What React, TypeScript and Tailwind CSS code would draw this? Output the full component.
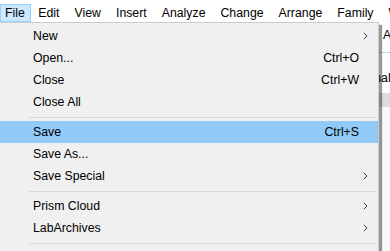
import { Fragment } from 'react';

type Entry =
  | { kind: 'item'; label: string; shortcut?: string; submenu?: boolean; active?: boolean }
  | { kind: 'sep' };

const menuBar = ['File', 'Edit', 'View', 'Insert', 'Analyze', 'Change', 'Arrange', 'Family', 'Window'];

const entries: Entry[] = [
  { kind: 'item', label: 'New', submenu: true },
  { kind: 'item', label: 'Open...', shortcut: 'Ctrl+O' },
  { kind: 'item', label: 'Close', shortcut: 'Ctrl+W' },
  { kind: 'item', label: 'Close All' },
  { kind: 'sep' },
  { kind: 'item', label: 'Save', shortcut: 'Ctrl+S', active: true },
  { kind: 'item', label: 'Save As...' },
  { kind: 'item', label: 'Save Special', submenu: true },
  { kind: 'sep' },
  { kind: 'item', label: 'Prism Cloud', submenu: true },
  { kind: 'item', label: 'LabArchives', submenu: true },
  { kind: 'sep' },
  { kind: 'item', label: 'Import' },
];

const Chevron = () => (
  <svg width="5" height="8" viewBox="0 0 5 8" className="block">
    <path d="M0.8 0.8 L4 4 L0.8 7.2" fill="none" stroke="#3c3c3c" strokeWidth="1" />
  </svg>
);

export default function App() {
  return (
    <div
      className="relative w-[390px] h-[251px] overflow-hidden bg-white text-black flex flex-col"
      style={{ fontFamily: '"Liberation Sans", Arial, sans-serif' }}
    >
      {/* menu bar */}
      <div className="h-[23px] shrink-0 flex items-start pt-[4px] text-[12.3px] whitespace-nowrap">
        {menuBar.map((m, i) => (
          <span
            key={m}
            className={
              i === 0
                ? 'h-[18px] flex items-center pl-[4px] pr-[5px] border border-[#99d1ff] bg-[#cce8ff]'
                : 'h-[18px] flex items-center px-[6.5px] border border-transparent'
            }
          >
            {m}
          </span>
        ))}
      </div>

      {/* app content peeking out behind the menu */}
      <div className="flex-1 flex">
        <div className="flex-1" />
        <div className="w-[12px] flex flex-col text-[12.3px] whitespace-nowrap overflow-hidden">
          <div className="h-[22px] pl-[5px] flex items-center pt-[2px]">Ar</div>
          <div className="h-[7px]" />
          <div className="border-t border-dashed border-[#a8cdef]" />
          <div className="h-[18px]" />
          <div className="h-[14px] flex items-center ml-[-12px]">Analysis</div>
          <div className="h-[8px]" />
          <div className="h-[14px] bg-[#dcdcdc]" />
          <div className="flex-1 bg-[#f9f9f9]" />
        </div>
      </div>

      {/* File dropdown */}
      <div className="absolute left-[-1px] top-[22px] w-[380px] h-[240px] bg-[#f0f0f0] border border-[#cccccc] shadow-[3px_3px_1px_rgba(0,0,0,0.4)] py-[2px] text-[12.3px]">
        {entries.map((e, i) => (
          <Fragment key={i}>
            {e.kind === 'sep' ? (
              <div className="h-[8px] pt-[4px] pl-[29px] pr-[1px]">
                <div className="h-px bg-[#d7d7d7]" />
              </div>
            ) : (
              <div
                className={`h-[22px] flex items-center pl-[33px] ${e.active ? 'bg-[#91c9f7]' : ''}`}
              >
                <span className="flex-1">{e.label}</span>
                {e.shortcut && <span className="pr-[19px]">{e.shortcut}</span>}
                {e.submenu && (
                  <span className="pr-[10px]">
                    <Chevron />
                  </span>
                )}
              </div>
            )}
          </Fragment>
        ))}
      </div>
    </div>
  );
}
